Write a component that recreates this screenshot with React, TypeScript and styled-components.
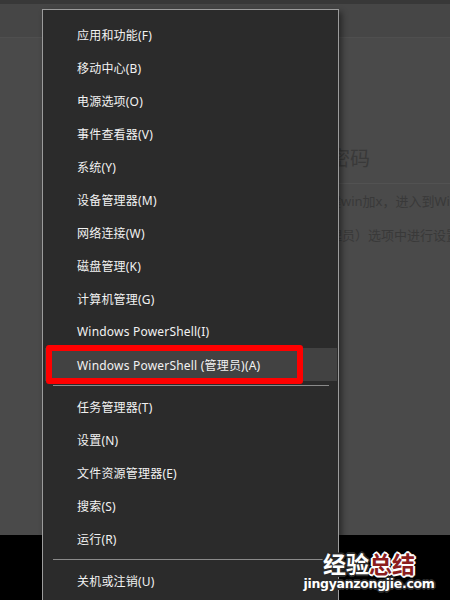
import React from "react";
import styled, { createGlobalStyle } from "styled-components";

const GlobalStyle = createGlobalStyle`
  html, body {
    margin: 0;
    padding: 0;
    background: #4a4a4a;
    overflow: hidden;
  }
`;

const Page = styled.div`
  position: relative;
  width: 450px;
  height: 600px;
  overflow: hidden;
  display: flex;
  flex-direction: column;
  background: #4a4a4a;
  font-family: "Noto Sans", "Noto Sans CJK SC", sans-serif;
`;

const TopStrip = styled.div`
  height: 4px;
  background: #383838;
`;

const HeaderBand = styled.div`
  height: 33px;
  background: #464646;
  border-bottom: 1px solid #4f4f4f;
`;

const Article = styled.div`
  flex: 1;
  padding: 107px 0 0 250px;
  color: #393939;
  white-space: nowrap;
`;

const ArticleTitle = styled.div`
  font-size: 20px;
  line-height: 28px;
  padding-bottom: 10px;
  border-bottom: 1px solid #525252;
`;

const ArticleLine = styled.div<{ $indent: number }>`
  font-size: 13px;
  line-height: 34px;
  margin-left: ${(p) => p.$indent}px;
`;

const Footer = styled.div`
  height: 65px;
  background: #000;
`;

const Menu = styled.div`
  position: absolute;
  left: 42px;
  top: 9px;
  width: 295px;
  height: 620px;
  box-sizing: content-box;
  background: #2b2b2b;
  border: 1px solid #9c9c9c;
  box-shadow: 3px 3px 6px rgba(0, 0, 0, 0.45);
  padding-top: 8px;
  display: flex;
  flex-direction: column;
`;

const Item = styled.div<{ $hover?: boolean }>`
  height: 33px;
  margin: 0 1px 0 2px;
  padding-left: 32px;
  display: flex;
  align-items: center;
  font-size: 12px;
  letter-spacing: 0.2px;
  color: #f2f2f2;
  background: ${(p) => (p.$hover ? "#424242" : "transparent")};
`;

const Separator = styled.div`
  height: 1px;
  margin: 4px 9px 4px 10px;
  background: #8a8a8a;
`;

const Highlight = styled.div`
  position: absolute;
  left: 46px;
  top: 345px;
  width: 257px;
  height: 39px;
  box-sizing: border-box;
  border: 6px solid #ff0000;
  border-radius: 3px;
`;

const Watermark = styled.div`
  position: absolute;
  left: 298px;
  top: 551px;
  width: 142px;
  display: flex;
  flex-direction: column;
  align-items: center;
  font-weight: bold;
`;

const outline = (c: string) =>
  `-1px -1px 0 ${c}, 1px -1px 0 ${c}, -1px 1px 0 ${c}, 1px 1px 0 ${c}, 0 2px 0 ${c}, 2px 0 0 ${c}, -2px 0 0 ${c}, 0 -2px 0 ${c}`;

const MarkTitle = styled.div`
  font-family: "Noto Sans CJK SC", sans-serif;
  font-size: 23px;
  line-height: 25px;
`;

const MarkPart = styled.span<{ $red?: boolean }>`
  color: ${(p) => (p.$red ? "#8c1d1d" : "#ffffff")};
  text-shadow: ${(p) => outline(p.$red ? "#ffffff" : "#2a2a2a")};
`;

const MarkUrl = styled.div`
  font-family: "DejaVu Sans", sans-serif;
  font-size: 12.5px;
  line-height: 16px;
  letter-spacing: -0.3px;
  color: #ffffff;
  text-shadow: ${outline("#2a2a2a")};
`;

const groupA = [
  "应用和功能(F)",
  "移动中心(B)",
  "电源选项(O)",
  "事件查看器(V)",
  "系统(Y)",
  "设备管理器(M)",
  "网络连接(W)",
  "磁盘管理(K)",
  "计算机管理(G)",
  "Windows PowerShell(I)",
  "Windows PowerShell (管理员)(A)",
];

const groupB = ["任务管理器(T)", "设置(N)", "文件资源管理器(E)", "搜索(S)", "运行(R)"];

export default function App() {
  return (
    <Page>
      <GlobalStyle />
      <TopStrip />
      <HeaderBand />
      <Article>
        <ArticleTitle>设置开机密码</ArticleTitle>
        <ArticleLine $indent={0}>首先按下快捷键win加x，进入到Windows PowerShell</ArticleLine>
        <ArticleLine $indent={1}>打开（系统管理员）选项中进行设置</ArticleLine>
      </Article>
      <Footer />

      <Menu>
        {groupA.map((t, i) => (
          <Item key={t} $hover={i === groupA.length - 1}>
            {t}
          </Item>
        ))}
        <Separator />
        {groupB.map((t) => (
          <Item key={t}>{t}</Item>
        ))}
        <Separator />
        <Item>关机或注销(U)</Item>
      </Menu>

      <Highlight />

      <Watermark>
        <MarkTitle>
          <MarkPart>经验</MarkPart>
          <MarkPart $red>总结</MarkPart>
        </MarkTitle>
        <MarkUrl>jingyanzongjie.com</MarkUrl>
      </Watermark>
    </Page>
  );
}
